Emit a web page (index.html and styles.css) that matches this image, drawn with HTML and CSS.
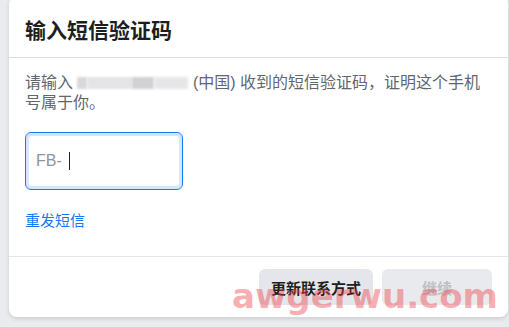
FILE: index.html
```html
<!DOCTYPE html>
<html>
<head>
    <meta charset="UTF-8">
    <title>输入短信验证码</title>
    <link rel="stylesheet" href="styles.css">
</head>
<body>
    <div class="dialog">
        <div class="dialog-header">
            <h2>输入短信验证码</h2>
        </div>

        <div class="dialog-body">
            <p class="desc">请输入 <span class="masked"><span class="blur b1"></span><span class="blur b2"></span><span class="blur b3"></span><span class="blur b4"></span></span> (中国) 收到的短信验证码，证明这个手机号属于你。</p>

            <div class="code-box">
                <span class="prefix">FB-</span>
                <span class="caret"></span>
            </div>

            <a class="resend" href="#">重发短信</a>
        </div>

        <div class="dialog-footer">
            <button class="btn btn-update">更新联系方式</button>
            <button class="btn disabled">继续</button>
        </div>

        <div class="watermark">awgerwu.com</div>
    </div>
</body>
</html>
```

FILE: styles.css
```css
body {
    margin: 0;
    padding: 0 1px 0 9px;
    background-color: #e9ebee;
    font-family: "Liberation Sans", "Noto Sans CJK SC", sans-serif;
    height: 327px;
    overflow: hidden;
}

.dialog {
    position: relative;
    margin-top: -4px;
    background-color: #fff;
    border-radius: 8px;
    box-shadow: 0 2px 4px rgba(0, 0, 0, 0.12);
}

.dialog-header {
    height: 62px;
    padding: 4px 16px 0;
    box-sizing: border-box;
    display: flex;
    align-items: center;
    border-bottom: 1px solid #dadde1;
}

.dialog-header h2 {
    margin: 0;
    font-size: 21px;
    font-weight: bold;
    color: #1c1e21;
}

.dialog-body {
    padding: 15px 16px 26px;
}

.desc {
    margin: 0;
    font-size: 16px;
    line-height: 20px;
    color: #606770;
}

.masked {
    display: inline-flex;
    align-items: center;
    height: 12px;
    vertical-align: -1px;
}

.blur {
    display: inline-block;
    height: 12px;
}

.b1 { width: 10px; background-color: #d9d9dc; filter: blur(1px); }
.b2 { width: 45px; background-color: #e4e4e6; filter: blur(1px); }
.b3 { width: 22px; background-color: #d2d2d4; filter: blur(1px); }
.b4 { width: 34px; background-color: #e6e6e8; filter: blur(1.5px); }

.code-box {
    width: 146px;
    height: 52px;
    margin-top: 19px;
    padding: 2px 0 2px 10px;
    border: 1px solid #1877f2;
    border-radius: 6px;
    box-shadow: inset 0 0 0 3px #d6e5fa;
    display: flex;
    align-items: center;
}

.prefix {
    font-size: 16px;
    color: #90949c;
}

.caret {
    width: 1px;
    height: 18px;
    margin-left: 7px;
    background-color: #1c1e21;
}

.resend {
    display: block;
    margin-top: 22px;
    font-size: 15px;
    line-height: 18px;
    color: #1877f2;
    text-decoration: none;
}

.dialog-footer {
    display: flex;
    justify-content: flex-end;
    gap: 9px;
    padding: 12px 16px;
    border-top: 1px solid #e4e6eb;
}

.btn {
    height: 36px;
    width: 110px;
    padding: 0;
    border: none;
    border-radius: 6px;
    background-color: #e4e6eb;
    color: #1c1e21;
    font-family: "Liberation Sans", "Noto Sans CJK SC", sans-serif;
    font-size: 15px;
    font-weight: bold;
}

.btn-update {
    width: 114px;
}

.btn.disabled {
    color: #bcc0c4;
    background-color: #e9eaed;
}

.watermark {
    position: absolute;
    left: 223px;
    bottom: 1px;
    font-family: "DejaVu Sans", sans-serif;
    font-weight: bold;
    font-size: 34px;
    color: rgba(240, 60, 70, 0.42);
    pointer-events: none;
}
```
